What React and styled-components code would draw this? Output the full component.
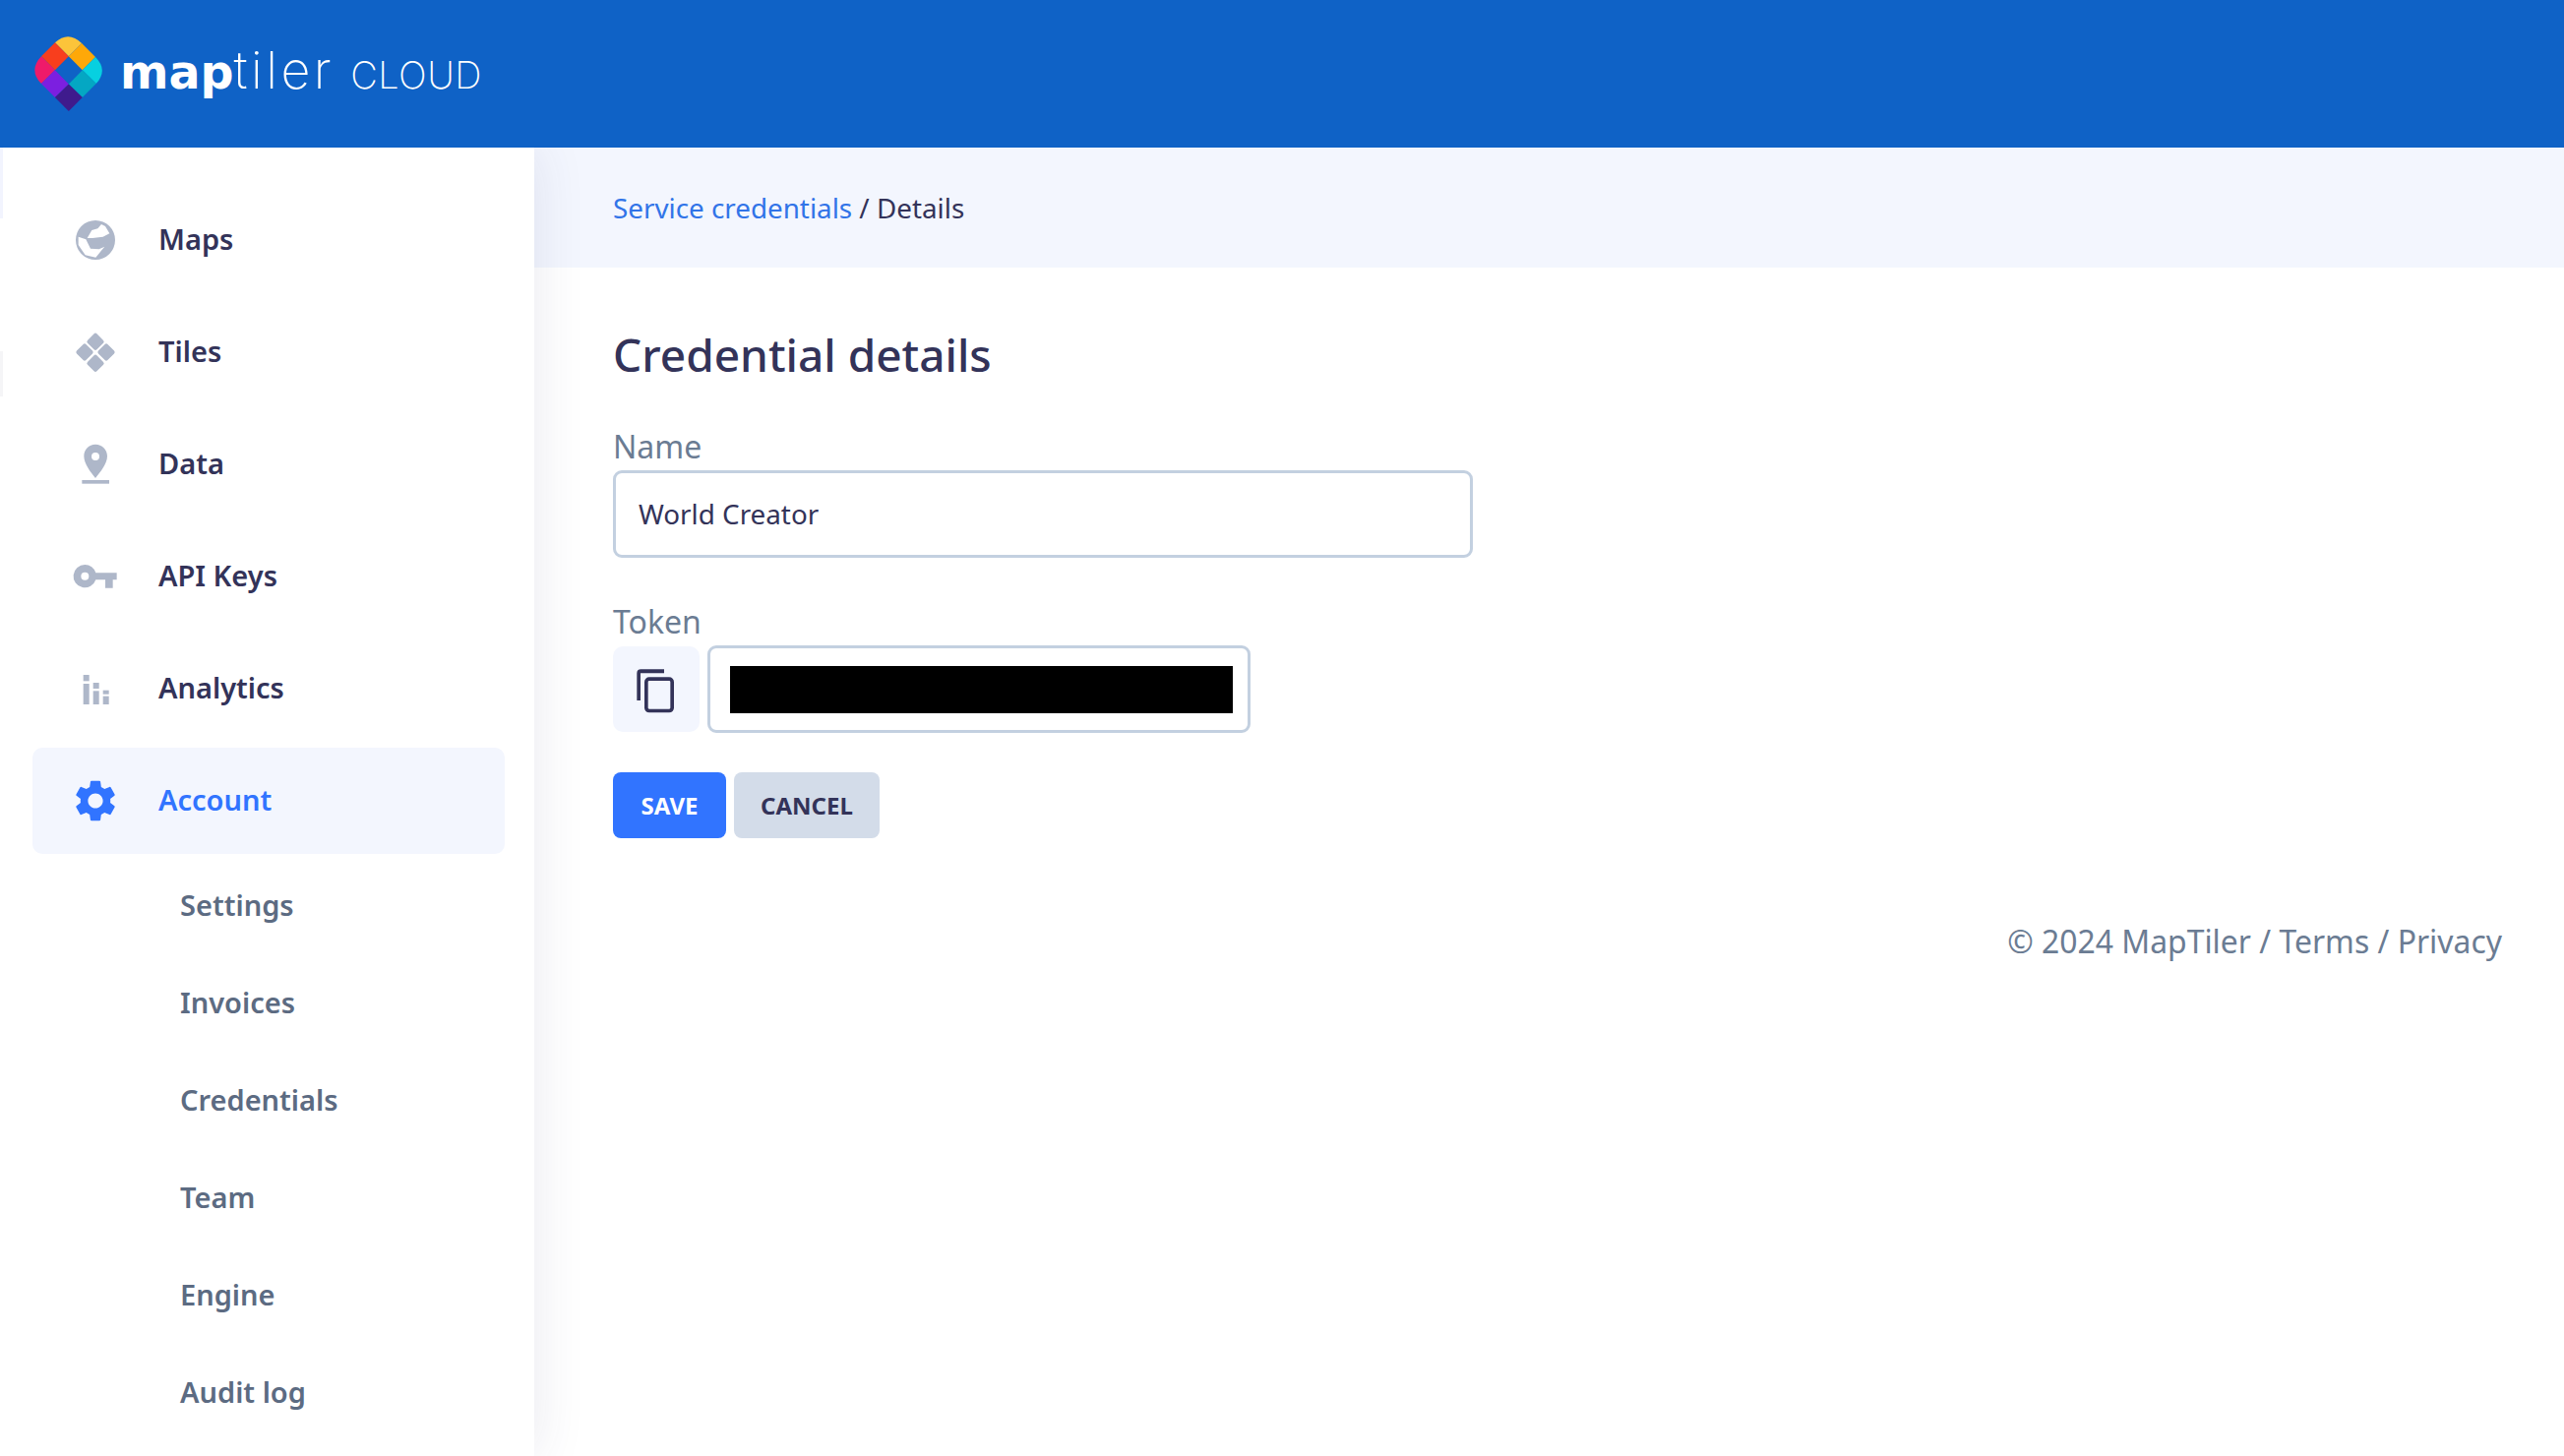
import React from "react";
import styled, { createGlobalStyle } from "styled-components";

const Global = createGlobalStyle`
  html, body { margin: 0; padding: 0; height: 100%; background: #fff; overflow: hidden; }
  body { font-family: "Noto Sans", "Open Sans", sans-serif; color: #333359; }
  * { box-sizing: border-box; }
`;

const Page = styled.div`
  display: grid;
  grid-template-rows: 150px 1fr;
  width: 100vw;
  height: 100vh;
`;

const Header = styled.header`
  display: flex;
  align-items: center;
  padding-left: 35px;
  gap: 18px;
  background: #0f62c6;
`;

const Brand = styled.div`
  display: flex;
  align-items: baseline;
  color: #fff;
  margin-top: -8px;
`;

const BrandBold = styled.span`
  font-family: "DejaVu Sans", sans-serif;
  font-weight: 700;
  font-size: 47.5px;
`;

const BrandThin = styled.span`
  font-family: "Inter", sans-serif;
  font-weight: 200;
  font-size: 52px;
  letter-spacing: 3.5px;
`;

const BrandCloud = styled.span`
  font-family: "Inter", sans-serif;
  font-weight: 200;
  font-size: 38px;
  margin-left: 16px;
  letter-spacing: 0.5px;
`;

const Body = styled.div`
  display: grid;
  grid-template-columns: 543px 1fr;
  min-height: 0;
`;

const Sidebar = styled.nav`
  position: relative;
  z-index: 1;
  display: flex;
  flex-direction: column;
  padding-top: 40px;
  background: #fff;
  box-shadow: 0 0 50px rgba(51, 51, 110, 0.11);
  clip-path: inset(0 -80px 0 0);
  &::before {
    content: "";
    position: absolute;
    left: 0;
    top: 0;
    width: 3px;
    height: 72px;
    background: #f2f4fe;
  }
  &::after {
    content: "";
    position: absolute;
    left: 0;
    top: 207px;
    width: 3px;
    height: 46px;
    background: #f5f5f7;
  }
`;

const NavItem = styled.a`
  display: flex;
  align-items: center;
  width: 480px;
  height: 108px;
  margin-left: 33px;
  border-radius: 10px;
  font-size: 29px;
  font-weight: 600;
  color: ${(p) => (p.$active ? "#3174ff" : "#333359")};
  background: ${(p) => (p.$active ? "#f3f6fe" : "transparent")};
  & + & { margin-top: 6px; }
`;

const NavLabel = styled.span`
  margin-bottom: 3px;
`;

const NavIconBox = styled.span`
  display: flex;
  justify-content: center;
  align-items: center;
  width: 128px;
  flex: none;
`;

const NavIcon = styled.svg`
  width: 60px;
  height: 60px;
  fill: ${(p) => (p.$active ? "#3174ff" : "#aeb7c9")};
`;

const SubList = styled.div`
  display: flex;
  flex-direction: column;
  margin-top: 3px;
`;

const SubItem = styled.a`
  display: flex;
  align-items: center;
  height: 99px;
  padding-left: 183px;
  padding-bottom: 3px;
  font-size: 29px;
  font-weight: 600;
  color: #5c6b82;
`;

const Main = styled.main`
  display: flex;
  flex-direction: column;
  min-width: 0;
`;

const Breadcrumb = styled.div`
  display: flex;
  align-items: center;
  height: 122px;
  padding-left: 80px;
  padding-bottom: 1px;
  font-size: 27.8px;
  background: #f3f6fe;
  white-space: pre;
`;

const Crumb = styled.a`
  color: #3174e8;
`;

const Content = styled.div`
  display: flex;
  flex-direction: column;
  align-items: flex-start;
  padding: 0 63px 0 80px;
`;

const Title = styled.h1`
  margin: 55px 0 0;
  font-size: 46px;
  line-height: 66px;
  font-weight: 500;
`;

const FieldLabel = styled.label`
  display: block;
  font-size: 32px;
  line-height: 44px;
  color: #6b7c93;
  margin-top: ${(p) => p.$top}px;
`;

const inputFrame = `
  border: 3px solid #c3d0e0;
  border-radius: 9px;
  background: #fff;
`;

const NameInput = styled.div`
  ${inputFrame}
  display: flex;
  align-items: center;
  width: 874px;
  height: 89px;
  margin-top: 2px;
  padding-left: 23px;
  padding-bottom: 1px;
  font-size: 27.8px;
`;

const TokenRow = styled.div`
  display: flex;
  align-items: center;
  gap: 8px;
  margin-top: 2px;
`;

const CopyButton = styled.button`
  display: flex;
  align-items: center;
  justify-content: center;
  width: 88px;
  height: 87px;
  padding: 0;
  border: 0;
  border-radius: 10px;
  background: #f3f6fe;
`;

const TokenField = styled.div`
  ${inputFrame}
  display: flex;
  align-items: center;
  width: 552px;
  height: 89px;
  padding-left: 20px;
`;

const Redaction = styled.div`
  width: 511px;
  height: 48px;
  background: #000;
`;

const Actions = styled.div`
  display: flex;
  gap: 8px;
  margin-top: 40px;
`;

const Button = styled.button`
  height: 67px;
  width: ${(p) => p.$w}px;
  padding: 0;
  border: 0;
  border-radius: 8px;
  font-family: inherit;
  font-size: 24px;
  font-weight: 700;
  color: ${(p) => (p.$primary ? "#fff" : "#333359")};
  background: ${(p) => (p.$primary ? "#3174ff" : "#d3dce9")};
`;

const Footer = styled.footer`
  align-self: flex-end;
  margin-top: 83px;
  font-size: 31.9px;
  line-height: 44px;
  color: #6b7c93;
`;

const Logo = () => (
  <svg width="69" height="77" viewBox="45 50 208 230" aria-hidden="true">
    <path fill="#fcc43a" d="M108 68Q149 30 190 70L150 110Z" />
    <path fill="#f83e1d" d="M66 110L108 68L150 110L108 152Z" />
    <path fill="#fea808" d="M150 110L190 70L232 112L192 152Z" />
    <path fill="#ef1a6a" d="M66 110L108 152L66 194Q26 152 66 110Z" />
    <path fill="#07d0e0" d="M232 112L192 152L234 194Q272 152 232 112Z" />
    <path fill="#7c1fe0" d="M66 194L108 152L150 195L108 236Z" />
    <path fill="#04a7c3" d="M150 195L192 152L234 194L192 236Z" />
    <path fill="#3f1b8d" d="M108 236L150 195L192 236L150 278Z" />
  </svg>
);

const GlobeIcon = () => (
  <NavIcon viewBox="7 0 180 180">
    <path fillRule="evenodd" d="M97 30a60 60 0 1 0 0 120a60 60 0 1 0 0-120ZM72 84L86 60L104 55L115 42L127 48L140 70L120 80L88 84ZM45 80L68 88L82 116L108 118L125 110L98 143L66 136L45 105Z" />
  </NavIcon>
);

const TilesIcon = () => (
  <NavIcon viewBox="7 8 180 180">
    <rect x="77" y="46" width="40" height="40" rx="6" transform="rotate(45 97 66)" />
    <rect x="110" y="78" width="40" height="40" rx="6" transform="rotate(45 130 98)" />
    <rect x="77" y="112" width="40" height="40" rx="6" transform="rotate(45 97 132)" />
    <rect x="44" y="78" width="40" height="40" rx="6" transform="rotate(45 64 98)" />
  </NavIcon>
);

const PinIcon = () => (
  <NavIcon viewBox="5 351 180 180">
    <path fillRule="evenodd" d="M95 380C75 380 60 396 60 416C60 440 82 466 95 483C108 466 131 440 131 416C131 396 115 380 95 380ZM95 405a12 12 0 1 1 0 24a12 12 0 1 1 0-24Z" />
    <rect x="54" y="489" width="83" height="11" />
  </NavIcon>
);

const KeyIcon = () => (
  <NavIcon viewBox="7 3 180 180">
    <path fillRule="evenodd" d="M65 57a35 35 0 0 1 33 25H162V103H150V128H127V103H98A35 35 0 1 1 65 57ZM65 80a12 12 0 1 0 0 24a12 12 0 1 0 0-24Z" />
  </NavIcon>
);

const BarsIcon = () => (
  <NavIcon viewBox="7 345 180 180">
    <rect x="60" y="393" width="18" height="19" />
    <rect x="60" y="420" width="18" height="63" />
    <rect x="90" y="417" width="18" height="18" />
    <rect x="90" y="442" width="18" height="41" />
    <rect x="120" y="440" width="18" height="12" />
    <rect x="120" y="458" width="18" height="25" />
  </NavIcon>
);

const GearIcon = () => (
  <NavIcon $active viewBox="-2.2 -2.2 28.4 28.4">
    <path d="M19.14 12.94c.04-.3.06-.61.06-.94 0-.32-.02-.64-.07-.94l2.03-1.58c.18-.14.23-.41.12-.61l-1.92-3.32c-.12-.22-.37-.29-.59-.22l-2.39.96c-.5-.38-1.03-.7-1.62-.94l-.36-2.54c-.04-.24-.24-.41-.48-.41h-3.84c-.24 0-.43.17-.47.41l-.36 2.54c-.59.24-1.13.57-1.62.94l-2.39-.96c-.22-.08-.47 0-.59.22L2.74 8.87c-.12.21-.08.47.12.61l2.03 1.58c-.05.3-.09.63-.09.94s.02.64.07.94l-2.03 1.58c-.18.14-.23.41-.12.61l1.92 3.32c.12.22.37.29.59.22l2.39-.96c.5.38 1.03.7 1.62.94l.36 2.54c.05.24.24.41.48.41h3.84c.24 0 .44-.17.47-.41l.36-2.54c.59-.24 1.13-.56 1.62-.94l2.39.96c.22.08.47 0 .59-.22l1.92-3.32c.12-.22.07-.47-.12-.61l-2.01-1.58zM12 15.6c-1.98 0-3.6-1.62-3.6-3.6s1.62-3.6 3.6-3.6 3.6 1.62 3.6 3.6-1.62 3.6-3.6 3.6z" />
  </NavIcon>
);

const CopyIcon = () => (
  <svg width="60" height="60" viewBox="21 5 180 180" aria-hidden="true">
    <path fill="#333359" d="M63 128H52V45A12 12 0 0 1 64 33H135V45H63Z" />
    <rect x="80.5" y="62.5" width="79" height="97" rx="9" fill="none" stroke="#333359" strokeWidth="11" />
  </svg>
);

const navEntries = [
  ["Maps", GlobeIcon],
  ["Tiles", TilesIcon],
  ["Data", PinIcon],
  ["API Keys", KeyIcon],
  ["Analytics", BarsIcon],
  ["Account", GearIcon, true],
];

const subEntries = ["Settings", "Invoices", "Credentials", "Team", "Engine", "Audit log"];

export default function App() {
  return (
    <Page>
      <Global />
      <Header>
        <Logo />
        <Brand>
          <BrandBold>map</BrandBold>
          <BrandThin>tiler</BrandThin>
          <BrandCloud>CLOUD</BrandCloud>
        </Brand>
      </Header>
      <Body>
        <Sidebar>
          {navEntries.map(([label, Icon, active]) => (
            <NavItem key={label} $active={active}>
              <NavIconBox>
                <Icon />
              </NavIconBox>
              <NavLabel>{label}</NavLabel>
            </NavItem>
          ))}
          <SubList>
            {subEntries.map((label) => (
              <SubItem key={label}>{label}</SubItem>
            ))}
          </SubList>
        </Sidebar>
        <Main>
          <Breadcrumb>
            <Crumb>Service credentials</Crumb> / Details
          </Breadcrumb>
          <Content>
            <Title>Credential details</Title>
            <FieldLabel $top={39}>Name</FieldLabel>
            <NameInput>World Creator</NameInput>
            <FieldLabel $top={43}>Token</FieldLabel>
            <TokenRow>
              <CopyButton>
                <CopyIcon />
              </CopyButton>
              <TokenField>
                <Redaction />
              </TokenField>
            </TokenRow>
            <Actions>
              <Button $primary $w={115}>SAVE</Button>
              <Button $w={148}>CANCEL</Button>
            </Actions>
            <Footer>© 2024 MapTiler / Terms / Privacy</Footer>
          </Content>
        </Main>
      </Body>
    </Page>
  );
}
